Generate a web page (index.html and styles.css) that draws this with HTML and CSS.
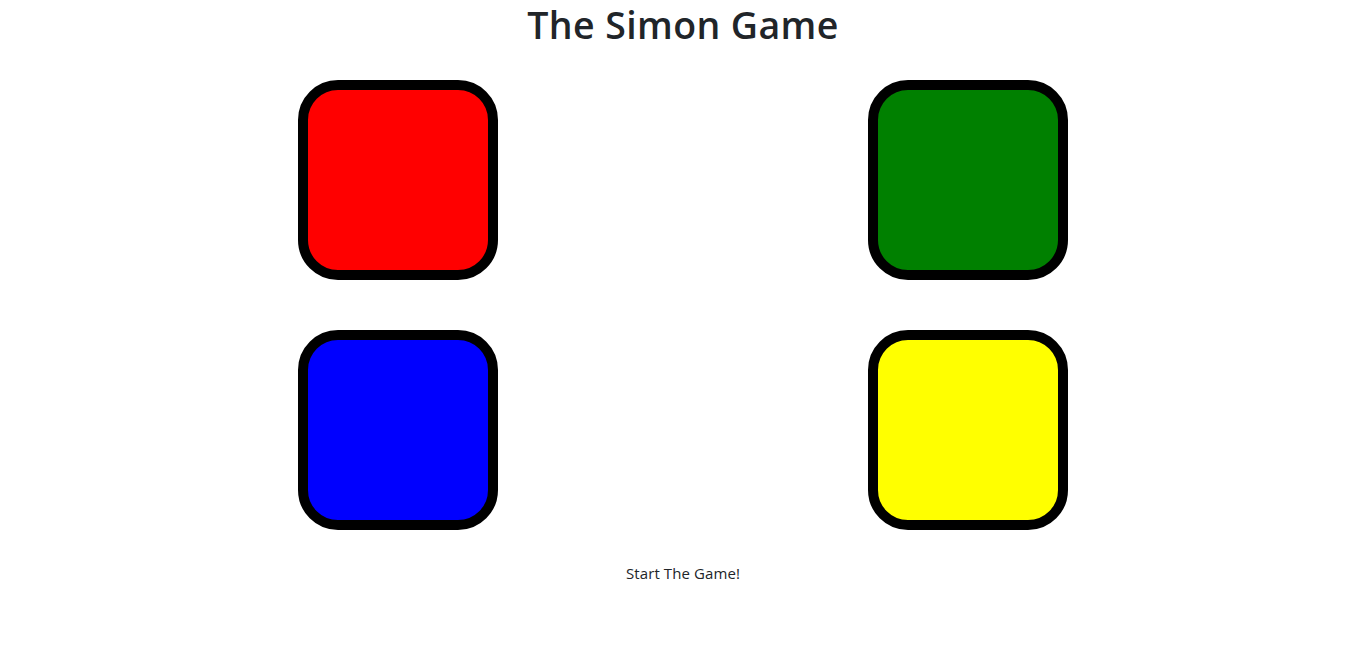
FILE: index.html
```html
<!DOCTYPE html>
<html lang="en">
<head>
<meta charset="utf-8">
<title>Simon Game</title>
<link rel="stylesheet" href="styles.css">
</head>
<body>
  <h1 class="title">The Simon Game</h1>
  <div class="board">
    <div class="row">
      <div class="pad red"></div>
      <div class="pad green"></div>
    </div>
    <div class="row">
      <div class="pad blue"></div>
      <div class="pad yellow"></div>
    </div>
  </div>
  <p class="status">Start The Game!</p>
</body>
</html>
```

FILE: styles.css
```css
html, body {
  margin: 0;
  padding: 0;
  background: #ffffff;
}
body {
  font-family: "Open Sans", "Noto Sans", sans-serif;
  color: #212529;
  text-align: center;
}
.title {
  margin: 0;
  font-size: 37.5px;
  font-weight: 600;
  line-height: 50px;
  letter-spacing: 0.4px;
}
.board {
  width: 770px;
  margin: 30px auto 0;
  display: flex;
  flex-direction: column;
  gap: 50px;
}
.row {
  display: flex;
  justify-content: space-between;
}
.pad {
  width: 200px;
  height: 200px;
  box-sizing: border-box;
  border: 10px solid #000;
  border-radius: 40px;
}
.red { background: #ff0000; }
.green { background: #008000; }
.blue { background: #0000ff; }
.yellow { background: #ffff00; }
.status {
  margin: 32px 0 0;
  font-size: 15px;
  line-height: 22px;
  letter-spacing: 0.1px;
}
```
